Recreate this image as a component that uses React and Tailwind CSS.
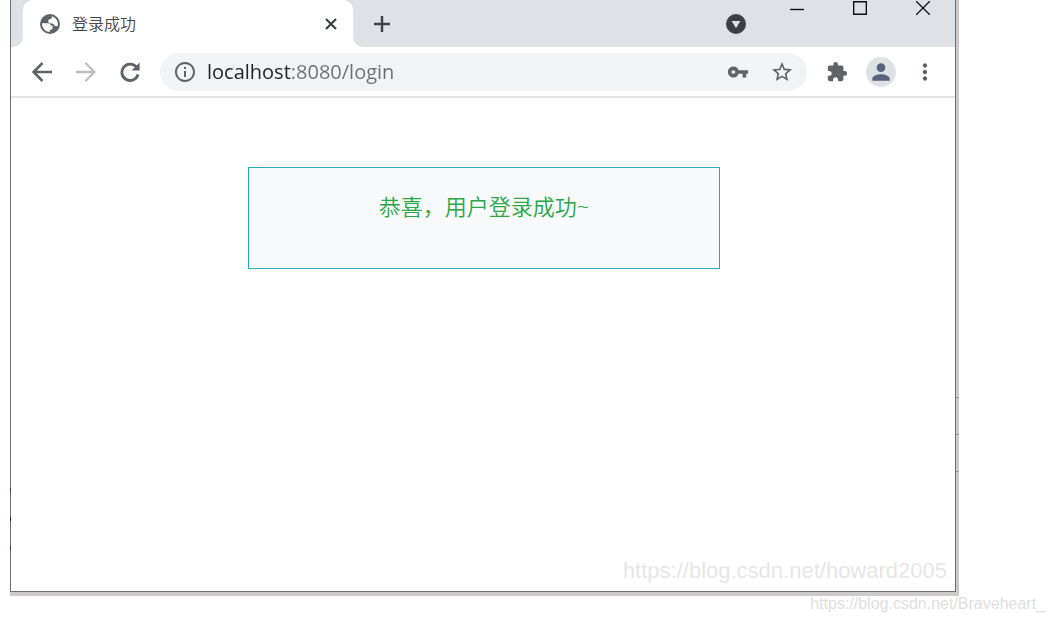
import React, { useState } from 'react';
import { MdInfoOutline, MdVpnKey, MdStarBorder, MdExtension, MdPerson, MdMoreVert } from 'react-icons/md';

const GlobeIcon = () => (
  <svg viewBox="0 0 20 20" className="size-5 shrink-0" aria-hidden="true">
    <circle cx="10" cy="10" r="10" fill="#5f6368" />
    <path
      d="M2 9.200h6c1.600 0 2.600 1 2.600 2.400h1.900v2.700c0 .9-.7 1.400-1.600 1.400H9.800v2.200C5.400 17.700 2 14.600 2 9.200zM12 2.200c3.500 1 5.900 4.200 5.900 7.700 0 .8-.1 1.500-.3 2.100-1.300.6-2.600.2-3.300-.8-.6-1-1.200-1.600-2.400-1.600-2.200 0-3.700-.8-3.700-2.300 0-1.300.9-2 2.200-2.200 1-.2 1.600-1.300 1.600-2.900z"
      fill="#fff"
    />
  </svg>
);

const BackIcon = () => (
  <svg viewBox="0 0 20 20" className="size-5" fill="none" stroke="currentColor" strokeWidth="2.500">
    <path d="M20 10H2M10.500 1L1.600 10l8.900 9" />
  </svg>
);

const ForwardIcon = () => (
  <svg viewBox="0 0 20 20" className="size-5" fill="none" stroke="currentColor" strokeWidth="2.300">
    <path d="M0 10h18M9.500 1l8.900 9-8.900 9" />
  </svg>
);

const ReloadIcon = () => (
  <svg viewBox="0 0 20 20" className="size-5" fill="none" stroke="currentColor" strokeWidth="2.800">
    <path d="M16.200 4.800A8.200 8.200 0 1 0 18 12.500" />
    <path d="M19.600.6v8h-8z" fill="currentColor" stroke="none" />
  </svg>
);

const TitleBar = () => (
  <div className="flex h-[47px] bg-[#dee1e6]">
    {/* curved feet on both sides of the active tab */}
    <div className="flex w-3 items-end bg-white">
      <div className="h-full w-3 rounded-br-[10px] bg-[#dee1e6]" />
    </div>
    <div className="flex w-[330px] shrink-0 bg-[#dee1e6]">
      <div className="flex flex-1 items-center rounded-t-[10px] bg-white pr-4 pl-[17px]">
        <GlobeIcon />
        <span className="ml-3 flex-1 text-base font-[350] text-[#45474a]">登录成功</span>
        <button type="button" aria-label="Close tab" className="text-[#3c4043]">
          <svg viewBox="0 0 12 12" className="size-3" stroke="currentColor" strokeWidth="2.200">
            <path d="M1 1l10 10M11 1L1 11" />
          </svg>
        </button>
      </div>
    </div>
    <div className="flex flex-1 bg-white">
      <div className="flex flex-1 rounded-bl-[10px] bg-[#dee1e6]">
        <button type="button" aria-label="New tab" className="ml-[21px] text-[#3c4043]">
          <svg viewBox="0 0 16 16" className="size-4" stroke="currentColor" strokeWidth="2.400">
            <path d="M8 0v16M0 8h16" />
          </svg>
        </button>
        <button type="button" aria-label="Search tabs" className="ml-auto">
          <svg viewBox="0 0 20 20" className="size-5">
            <circle cx="10" cy="10" r="10" fill="#3c4043" />
            <path d="M5.600 7h8.800L10 14.200z" fill="#dee1e6" />
          </svg>
        </button>
        <div className="ml-11 flex items-start gap-[49px] pt-px pr-[25px] text-[#111]">
          <button type="button" aria-label="Minimize">
            <svg viewBox="0 0 14 14" className="size-[14px]" stroke="currentColor" strokeWidth="1.400">
              <path d="M0 8.500h14" />
            </svg>
          </button>
          <button type="button" aria-label="Maximize">
            <svg viewBox="0 0 14 14" className="size-[14px]" fill="none" stroke="currentColor" strokeWidth="1.400">
              <path d="M.7.7h12.600v12.600H.7z" />
            </svg>
          </button>
          <button type="button" aria-label="Close">
            <svg viewBox="0 0 14 14" className="size-[14px]" stroke="currentColor" strokeWidth="1.300">
              <path d="M0 0l14 14M14 0L0 14" />
            </svg>
          </button>
        </div>
      </div>
    </div>
  </div>
);

const Toolbar = () => {
  const [url, setUrl] = useState('localhost:8080/login');

  return (
    <div className="flex h-[51px] items-center border-b-2 border-[#e2e3e5] pr-[17px] pl-[21px] text-[#5f6368]">
      <button type="button" aria-label="Back">
        <BackIcon />
      </button>
      <button type="button" aria-label="Forward" className="ml-6 text-[#bbbdbf]">
        <ForwardIcon />
      </button>
      <button type="button" aria-label="Reload" className="ml-6">
        <ReloadIcon />
      </button>
      <div className="ml-5 flex h-[38px] flex-1 items-center rounded-full bg-[#f1f3f4] pr-[13px] pl-[13px]">
        <MdInfoOutline className="size-6 shrink-0" />
        {/* host part is darker than the port and path */}
        <input
          type="text"
          aria-label="Address"
          value={url}
          onChange={(e) => setUrl(e.target.value)}
          className="ml-2.5 min-w-0 flex-1 bg-linear-to-r from-[#202124] from-[84px] to-[#6b6f74] to-[84px] bg-clip-text text-xl text-transparent outline-none"
        />
        <button type="button" aria-label="Passwords">
          <MdVpnKey className="size-[22px]" />
        </button>
        <button type="button" aria-label="Bookmark" className="ml-[21px]">
          <MdStarBorder className="size-6" />
        </button>
      </div>
      <button type="button" aria-label="Extensions" className="ml-[19px]">
        <MdExtension className="size-[22px]" />
      </button>
      <button
        type="button"
        aria-label="Profile"
        className="ml-[18px] flex size-[30px] items-center justify-center rounded-full bg-[#dee1e6] text-[#56637a]"
      >
        <MdPerson className="size-[26px]" />
      </button>
      <button type="button" aria-label="Menu" className="ml-4">
        <MdMoreVert className="size-[26px]" />
      </button>
    </div>
  );
};

const App = () => {
  return (
    <div className="min-h-screen bg-white font-['Open_Sans','Noto_Sans_CJK_SC',sans-serif]">
      <div className="relative mr-[94px] ml-2.5 bg-[#cbc9c9] pr-[3px] pb-1">
        <div className="flex min-h-[592px] flex-col border border-t-0 border-[#6f6f6f] bg-white">
          <TitleBar />
          <Toolbar />
          <main className="flex flex-1 flex-col pt-[69px] pr-[235px] pl-[237px]">
            <div className="h-[102px] border border-[#2aabbb] bg-[#f8f9fb] pt-[22px] text-center">
              <h1 className="text-[22px] leading-8 font-[350] text-[#28a745]">恭喜，用户登录成功~</h1>
            </div>
          </main>
          <p className="pr-2 pb-2 text-right font-['Liberation_Sans',sans-serif] text-[22px] leading-6 text-[#e6e6e6]">
            https://blog.csdn.net/howard2005
          </p>
        </div>
        {/* bits of the windows behind, showing at the edges */}
        <div className="absolute top-[397px] right-0 flex w-[3px] flex-col gap-9" aria-hidden="true">
          <i className="h-px bg-[#999]" />
          <i className="h-px bg-[#999]" />
          <i className="h-px bg-[#999]" />
        </div>
        <div className="absolute top-[488px] left-0 flex w-px flex-col gap-[25px]" aria-hidden="true">
          <i className="h-1 bg-[#5c3a22]" />
          <i className="h-1 bg-[#2b1620]" />
          <i className="h-1 bg-[#5c3a22]" />
        </div>
      </div>
      <p className="pr-2 text-right font-['Liberation_Sans',sans-serif] text-base leading-4 text-[#dedede]">
        https://blog.csdn.net/Braveheart_
      </p>
    </div>
  );
};

export default App;
